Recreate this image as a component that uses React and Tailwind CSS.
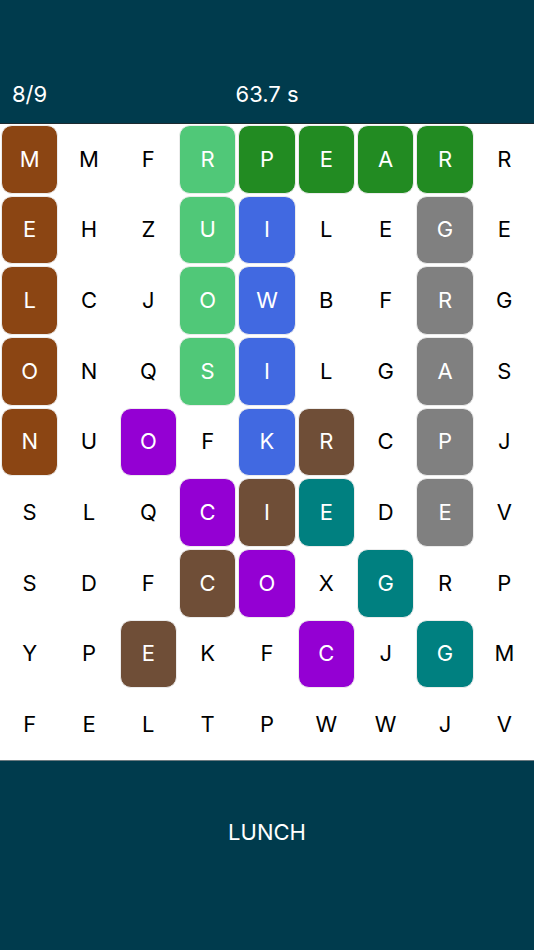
import React from 'react';

const COLORS = {
  a: 'bg-[#8b4513]',
  l: 'bg-[#50c878]',
  f: 'bg-[#228b22]',
  b: 'bg-[#4169e1]',
  g: 'bg-[#808080]',
  v: 'bg-[#9400d3]',
  c: 'bg-[#6f4e37]',
  t: 'bg-[#008080]',
};

// letters + colour key per row ('.' = no word)
const ROWS = [
  ['MMFRPEARR', 'a..lffff.'],
  ['EHZUILEGE', 'a..lb..g.'],
  ['LCJOWBFRG', 'a..lb..g.'],
  ['ONQSILGAS', 'a..lb..g.'],
  ['NUOFKRCPJ', 'a.v.bc.g.'],
  ['SLQCIEDEV', '...vct.g.'],
  ['SDFCOXGRP', '...cv.t..'],
  ['YPEKFCJGM', '..c..v.t.'],
  ['FELTPWWJV', '.........'],
];

const Cell = ({ letter, color }) => (
  <div className="p-[1px] h-full">
    {color ? (
      <div
        className={`${COLORS[color]} h-full rounded-[11px] border border-[#ececec] flex items-center justify-center text-white text-[22px]`}
      >
        {letter}
      </div>
    ) : (
      <div className="h-full flex items-center justify-center text-black text-[22px]">{letter}</div>
    )}
  </div>
);

export default function App() {
  return (
    <div
      className="w-[534px] h-[950px] bg-[#003b4d] flex flex-col"
      style={{ fontFamily: 'Inter, "Liberation Sans", sans-serif' }}
    >
      <div className="h-[124px] relative flex items-end pb-[12px] px-[12px] text-white text-[22px] border-b border-[#1c2a30]">
        <span>8/9</span>
        <span className="absolute left-0 right-0 bottom-[12px] text-center">63.7 s</span>
      </div>
      <div className="bg-white h-[636px] grid grid-cols-9 grid-rows-9">
        {ROWS.map(([letters, keys], r) =>
          letters.split('').map((ch, i) => (
            <Cell key={`${r}-${i}`} letter={ch} color={keys[i] === '.' ? null : keys[i]} />
          ))
        )}
      </div>
      <div className="flex-1 flex justify-center pt-[55px] text-white text-[22px] border-t border-[#6b7a80]">
        LUNCH
      </div>
    </div>
  );
}
